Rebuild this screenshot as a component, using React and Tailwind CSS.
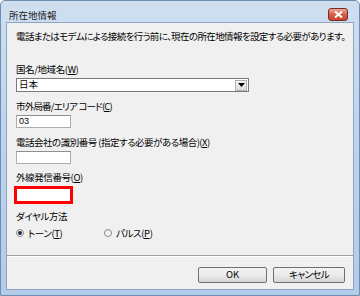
// Windows 7 style "所在地情報" (location information) dialog
const font = "font-['Noto_Sans_CJK_JP','Noto_Sans',sans-serif] [font-feature-settings:'palt']";

function Label({ children, className = '' }) {
  return (
    <div className={`h-[12px] leading-[12px] text-[9.5px] text-black whitespace-nowrap ${className}`}>
      {children}
    </div>
  );
}

function TextBox({ value, className = '' }) {
  return (
    <div
      className={`w-[55px] h-[13px] bg-white border border-[#abadb3] border-t-[#8e8f8f] pl-[2px] text-[9px] leading-[11px] font-['Liberation_Sans',sans-serif] ${className}`}
    >
      {value}
    </div>
  );
}

function Radio({ checked, children }) {
  return (
    <div className="flex items-center gap-[4px]">
      <span className="w-[8px] h-[8px] rounded-full border border-[#8a8a8a] bg-gradient-to-b from-[#e8e8e8] to-[#ffffff] flex items-center justify-center">
        {checked && <span className="w-[4px] h-[4px] rounded-full bg-[#1b2a3a]" />}
      </span>
      <Label className="tracking-[-0.4px]">{children}</Label>
    </div>
  );
}

function Button({ children, className = '' }) {
  return (
    <div
      className={`h-[16px] rounded-[2px] border border-[#707070] bg-gradient-to-b from-[#f3f3f3] via-[#ebebeb] to-[#d5d5d5] flex items-center justify-center text-[9.5px] leading-none text-black ${className}`}
    >
      {children}
    </div>
  );
}

export default function App() {
  return (
    <div className={`w-[360px] h-[296px] flex flex-col border border-[#6f8db3] rounded-t-[5px] bg-gradient-to-b from-[#cfdff0] via-[#bcd3ec] to-[#b2cbe8] ${font}`}>
      {/* title bar */}
      <div className="h-[21px] flex items-start justify-between pl-[8px] pr-[11px]">
        <div className="mt-[8px] h-[12px] leading-[12px] text-[9.5px] text-[#222]">所在地情報</div>
        <div className="mt-[7px] w-[20px] h-[13px] rounded-[3px] border border-[#7a2a24] bg-gradient-to-b from-[#eba795] via-[#d45f49] to-[#c9452f] flex items-center justify-center">
          <svg width="9" height="7" viewBox="0 0 9 7" className="block">
            <path d="M1 0.5 L8 6.5 M8 0.5 L1 6.5" stroke="white" strokeWidth="2" />
          </svg>
        </div>
      </div>

      {/* client area */}
      <div className="flex-1 mx-[5px] mb-[5px] border border-[#8ea6c4] bg-[#f0f0f0] flex flex-col">
        <div className="pl-[9px] flex flex-col">
          <Label className="mt-[7px] tracking-[-0.62px]">電話またはモデムによる接続を行う前に、現在の所在地情報を設定する必要があります。</Label>

          <Label className="mt-[21px] tracking-[-0.4px]">国名/地域名(<u>W</u>)</Label>
          <div className="mt-[3px] w-[233px] h-[14px] bg-white border border-[#7a7a7a] flex items-center justify-between pl-[2px] pr-[1px]">
            <span className="text-[9.5px] leading-none">日本</span>
            <span className="w-[12px] h-[11px] border border-[#b0b0b0] bg-gradient-to-b from-[#f6f6f6] to-[#dcdcdc] flex items-center justify-center">
              <svg width="7" height="4" viewBox="0 0 7 4">
                <path d="M0 0 H7 L3.5 4 Z" fill="#000" />
              </svg>
            </span>
          </div>

          <Label className="mt-[8px] tracking-[-0.8px]">市外局番/エリア コード(<u>C</u>)</Label>
          <TextBox value="03" className="mt-[3px]" />

          <Label className="mt-[8px] tracking-[-0.5px]">電話会社の識別番号 (指定する必要がある場合)(<u>X</u>)</Label>
          <TextBox className="mt-[3px]" />

          <Label className="mt-[7px] tracking-[-0.4px]">外線発信番号(<u>O</u>)</Label>
          <div className="mt-[3px] -ml-[2px] w-[59px] h-[18px] border-[3px] border-[#ff0000] bg-white" />

          <Label className="mt-[6px] tracking-[-0.4px]">ダイヤル方法</Label>
          <div className="mt-[5px] flex items-center">
            <div className="w-[88px]">
              <Radio checked>トーン(<u>T</u>)</Radio>
            </div>
            <Radio>パルス(<u>P</u>)</Radio>
          </div>
        </div>

        <div className="mt-[16px] border-t border-[#a0a0a0] border-b border-b-white" />

        <div className="flex justify-end gap-[6px] pr-[8px] mt-[10px]">
          <Button className="w-[69px]">OK</Button>
          <Button className="w-[72px] tracking-[-0.6px]">キャンセル</Button>
        </div>
      </div>
    </div>
  );
}
